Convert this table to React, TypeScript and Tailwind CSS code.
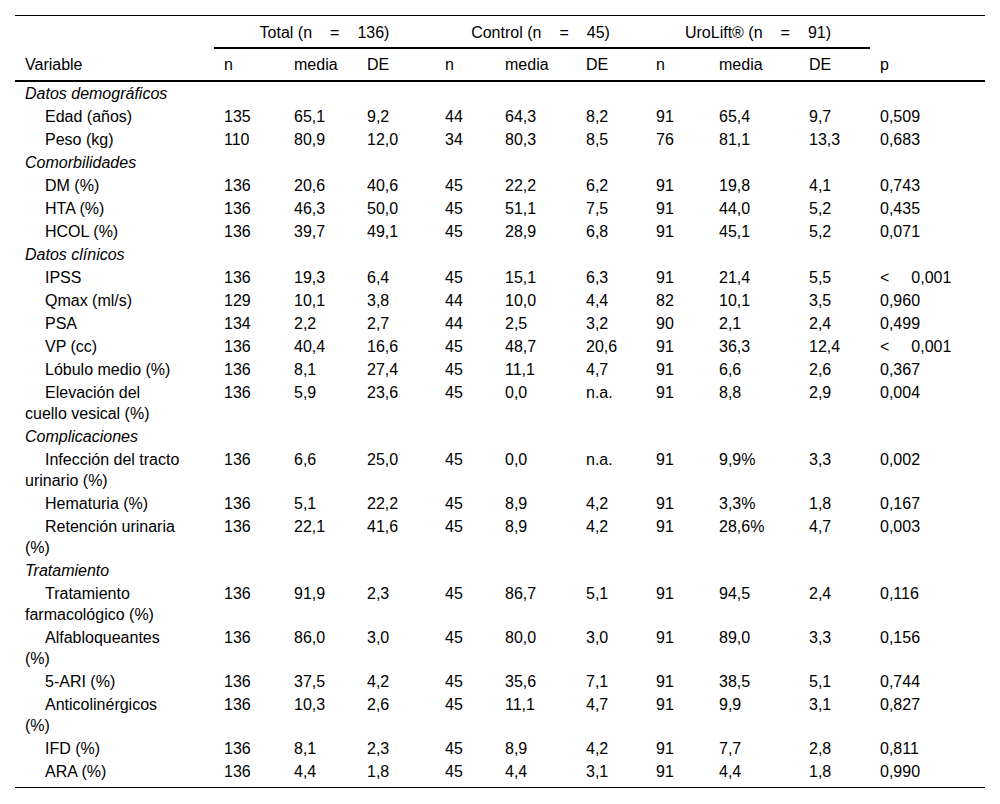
import React from "react";

type Row = { cat: string } | { label: string; v: string[] };

const rows: Row[] = [
  { cat: "Datos demográficos" },
  { label: "Edad (años)", v: ["135", "65,1", "9,2", "44", "64,3", "8,2", "91", "65,4", "9,7", "0,509"] },
  { label: "Peso (kg)", v: ["110", "80,9", "12,0", "34", "80,3", "8,5", "76", "81,1", "13,3", "0,683"] },
  { cat: "Comorbilidades" },
  { label: "DM (%)", v: ["136", "20,6", "40,6", "45", "22,2", "6,2", "91", "19,8", "4,1", "0,743"] },
  { label: "HTA (%)", v: ["136", "46,3", "50,0", "45", "51,1", "7,5", "91", "44,0", "5,2", "0,435"] },
  { label: "HCOL (%)", v: ["136", "39,7", "49,1", "45", "28,9", "6,8", "91", "45,1", "5,2", "0,071"] },
  { cat: "Datos clínicos" },
  { label: "IPSS", v: ["136", "19,3", "6,4", "45", "15,1", "6,3", "91", "21,4", "5,5", "<0,001"] },
  { label: "Qmax (ml/s)", v: ["129", "10,1", "3,8", "44", "10,0", "4,4", "82", "10,1", "3,5", "0,960"] },
  { label: "PSA", v: ["134", "2,2", "2,7", "44", "2,5", "3,2", "90", "2,1", "2,4", "0,499"] },
  { label: "VP (cc)", v: ["136", "40,4", "16,6", "45", "48,7", "20,6", "91", "36,3", "12,4", "<0,001"] },
  { label: "Lóbulo medio (%)", v: ["136", "8,1", "27,4", "45", "11,1", "4,7", "91", "6,6", "2,6", "0,367"] },
  { label: "Elevación del cuello vesical (%)", v: ["136", "5,9", "23,6", "45", "0,0", "n.a.", "91", "8,8", "2,9", "0,004"] },
  { cat: "Complicaciones" },
  { label: "Infección del tracto urinario (%)", v: ["136", "6,6", "25,0", "45", "0,0", "n.a.", "91", "9,9%", "3,3", "0,002"] },
  { label: "Hematuria (%)", v: ["136", "5,1", "22,2", "45", "8,9", "4,2", "91", "3,3%", "1,8", "0,167"] },
  { label: "Retención urinaria (%)", v: ["136", "22,1", "41,6", "45", "8,9", "4,2", "91", "28,6%", "4,7", "0,003"] },
  { cat: "Tratamiento" },
  { label: "Tratamiento farmacológico (%)", v: ["136", "91,9", "2,3", "45", "86,7", "5,1", "91", "94,5", "2,4", "0,116"] },
  { label: "Alfabloqueantes (%)", v: ["136", "86,0", "3,0", "45", "80,0", "3,0", "91", "89,0", "3,3", "0,156"] },
  { label: "5-ARI (%)", v: ["136", "37,5", "4,2", "45", "35,6", "7,1", "91", "38,5", "5,1", "0,744"] },
  { label: "Anticolinérgicos (%)", v: ["136", "10,3", "2,6", "45", "11,1", "4,7", "91", "9,9", "3,1", "0,827"] },
  { label: "IFD (%)", v: ["136", "8,1", "2,3", "45", "8,9", "4,2", "91", "7,7", "2,8", "0,811"] },
  { label: "ARA (%)", v: ["136", "4,4", "1,8", "45", "4,4", "3,1", "91", "4,4", "1,8", "0,990"] },
];

const widths = [199, 70, 73, 78, 60, 81, 70, 63, 90, 71, 115];

function Group({ name, n }: { name: string; n: string }) {
  return (
    <span>
      {name} (n<span className="mx-[18px]">=</span>
      {n})
    </span>
  );
}

function PVal({ v }: { v: string }) {
  if (v.startsWith("<")) {
    return (
      <span>
        &lt;<span className="ml-[22px]">{v.slice(1)}</span>
      </span>
    );
  }
  return <span>{v}</span>;
}

export default function App() {
  const subs = ["n", "media", "DE", "n", "media", "DE", "n", "media", "DE", "p"];
  return (
    <div className="bg-white px-[15px] pt-[15px] pb-[15px] font-['Liberation_Sans',Arial,sans-serif] text-[16px] leading-[21px] text-black">
      <table className="w-[970px] table-fixed border-collapse">
        <colgroup>
          {widths.map((w, i) => (
            <col key={i} style={{ width: w }} />
          ))}
        </colgroup>
        <thead>
          <tr className="border-t border-black">
            <th className="pt-[6px] pb-[4px] pl-[10px] text-left font-normal"></th>
            <th colSpan={3} className="border-b-2 border-black pt-[6px] pb-[4px] text-center font-normal">
              <Group name="Total" n="136" />
            </th>
            <th colSpan={3} className="border-b-2 border-black pt-[6px] pb-[4px] text-center font-normal">
              <Group name="Control" n="45" />
            </th>
            <th colSpan={3} className="border-b-2 border-black pt-[6px] pb-[4px] text-center font-normal">
              <Group name="UroLift®" n="91" />
            </th>
            <th className="pt-[6px] pb-[4px] font-normal"></th>
          </tr>
          <tr className="border-b-2 border-black">
            <th className="pt-[5px] pb-[5px] pl-[10px] text-left font-normal">Variable</th>
            {subs.map((s, i) => (
              <th key={i} className="pt-[5px] pb-[5px] pl-[10px] text-left font-normal">
                {s}
              </th>
            ))}
          </tr>
        </thead>
        <tbody>
          {rows.map((r, i) => {
            const last = i === rows.length - 1;
            const pad = last ? "pt-px pb-[5px]" : "py-px";
            if ("cat" in r) {
              return (
                <tr key={i}>
                  <td colSpan={11} className={`${pad} pl-[10px] italic`}>
                    {r.cat}
                  </td>
                </tr>
              );
            }
            return (
              <tr key={i} className={last ? "border-b border-black" : ""}>
                <td className={`${pad} pl-[10px] pr-[31px] align-top indent-[20px]`}>{r.label}</td>
                {r.v.map((v, j) => (
                  <td key={j} className={`${pad} pl-[10px] align-top whitespace-nowrap`}>
                    {j === 9 ? <PVal v={v} /> : v}
                  </td>
                ))}
              </tr>
            );
          })}
        </tbody>
      </table>
    </div>
  );
}
